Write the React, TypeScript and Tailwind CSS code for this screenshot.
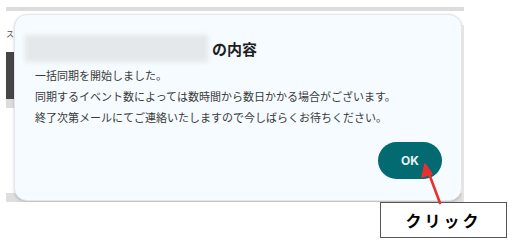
export default function App() {
  const jp = { fontFamily: '"Noto Sans CJK JP", "Noto Sans", sans-serif' };

  return (
    <div className="relative w-[509px] h-[241px] bg-white overflow-hidden" style={jp}>
      <div className="pt-[7px] pl-[6px]">
        {/* captured screen */}
        <div className="w-[458px] h-[195px] flex flex-col bg-white overflow-hidden">
          <div className="h-[4px] bg-[#dcdcdc]" />
          <div className="flex flex-1 pt-[3px] bg-[linear-gradient(to_bottom,#ffffff_0px,#ffffff_182px,#dedede_182px)]">
            {/* page behind the dialog */}
            <div className="w-[8px] flex flex-col">
              <div className="h-[24px] flex items-end">
                <span className="text-[8px] leading-none text-[#555]">ス</span>
              </div>
              <div className="h-[14px]" />
              <div className="h-[47px] bg-[#464646]" />
              <div className="h-[9px] bg-[#dcdcdc]" />
            </div>

            {/* dialog */}
            <div className="w-[448px] h-[187px] rounded-[13px] bg-[#f5fbfe] border border-[#e3e7ea] shadow-[0_1px_3px_rgba(0,0,0,0.18)] flex flex-col">
              <div className="flex items-center mt-[20px] ml-[10px]">
                <div className="w-[183px] h-[27px] bg-[#e5e8ea] blur-[2px]" />
                <span className="ml-[4px] text-[15px] font-bold text-[#1f1f1f] leading-none">の内容</span>
              </div>
              <div className="mt-[3px] pl-[20px] text-[11px] leading-[21px] text-[#3a3a3a]">
                <p>一括同期を開始しました。</p>
                <p>同期するイベント数によっては数時間から数日かかる場合がございます。</p>
                <p>終了次第メールにてご連絡いたしますので今しばらくお待ちください。</p>
              </div>
              <div className="flex justify-end pr-[19px] mt-[14px]">
                <button
                  className="w-[64px] h-[37px] rounded-full bg-[#036a71] text-[#e9f2f2] text-[12px] font-bold"
                  style={{ fontFamily: 'Inter, "Noto Sans", sans-serif' }}
                >
                  OK
                </button>
              </div>
            </div>

            <div className="w-[2px] bg-[#e4e4e4] mt-[11px]" />
          </div>
        </div>

        {/* annotation label */}
        <div className="ml-[374px] w-[127px] h-[36px] border-[1.5px] border-[#555] bg-white flex items-center justify-center">
          <span className="text-[16px] font-bold text-black tracking-[3px] leading-none">クリック</span>
        </div>
      </div>

      {/* red arrow */}
      <svg className="absolute left-0 top-0 pointer-events-none" width="509" height="241" viewBox="0 0 509 241">
        <line x1="440" y1="203" x2="428" y2="171" stroke="#e8302e" strokeWidth="2.6" strokeLinecap="round" />
        <polygon points="425,164 422,177 432,174" fill="#e8302e" stroke="#e8302e" strokeWidth="1.5" strokeLinejoin="round" />
      </svg>
    </div>
  );
}
